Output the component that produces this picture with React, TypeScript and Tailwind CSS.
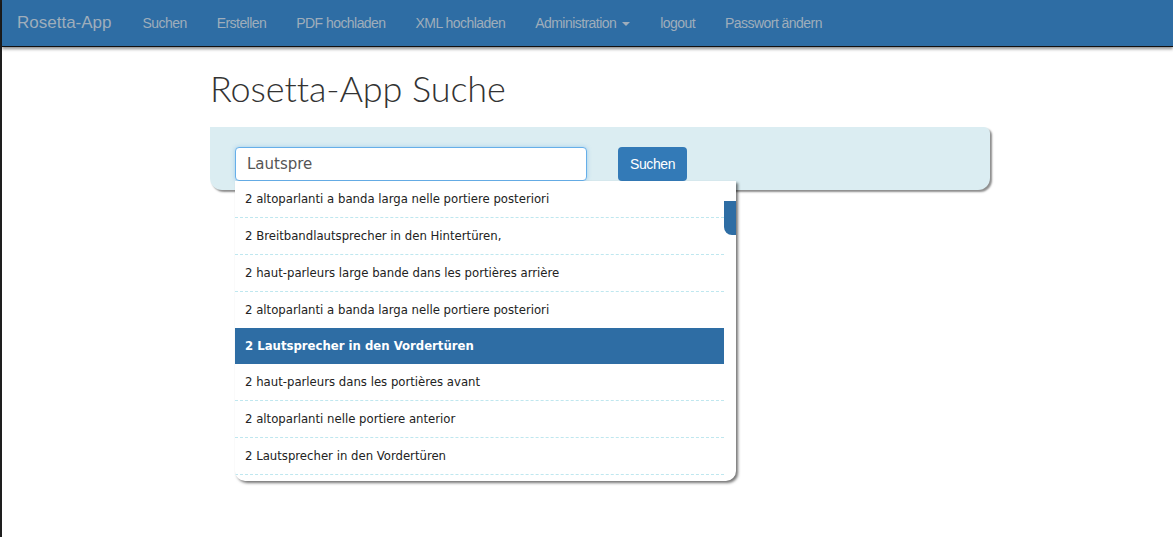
const navItems = ["Suchen", "Erstellen", "PDF hochladen", "XML hochladen"];

const results = [
  "2 altoparlanti a banda larga nelle portiere posteriori",
  "2 Breitbandlautsprecher in den Hintertüren,",
  "2 haut-parleurs large bande dans les portières arrière",
  "2 altoparlanti a banda larga nelle portiere posteriori",
  "2 Lautsprecher in den Vordertüren",
  "2 haut-parleurs dans les portières avant",
  "2 altoparlanti nelle portiere anterior",
  "2 Lautsprecher in den Vordertüren",
];

const Navbar = () => (
  <nav className="flex items-center h-[47px] bg-[#2e6da4] border-b border-[#111] shadow-[0_2px_3px_rgba(0,0,0,0.45)] font-['Liberation_Sans',Arial,sans-serif] text-[#9fadbb]">
    <a className="pl-[15px] pr-[16px] text-[17px]">Rosetta-App</a>
    {navItems.map((item) => (
      <a key={item} className="px-[15px] text-[14px] tracking-[-0.55px]">
        {item}
      </a>
    ))}
    <a className="flex items-center gap-[6px] px-[15px] text-[14px] tracking-[-0.55px]">
      Administration
      <span className="w-0 h-0 border-l-4 border-r-4 border-t-4 border-l-transparent border-r-transparent border-t-[#9fadbb] mt-[2px]"></span>
    </a>
    <a className="px-[15px] text-[14px] tracking-[-0.55px]">logout</a>
    <a className="px-[15px] text-[14px] tracking-[-0.55px]">Passwort ändern</a>
  </nav>
);

const Dropdown = () => (
  <div className="absolute left-0 top-[34px] w-[501px] h-[300px] bg-white rounded-b-[10px] shadow-[2px_2px_3px_rgba(0,0,0,0.55)] overflow-hidden flex">
    <ul className="w-[489px] font-['DejaVu_Sans_Condensed','DejaVu_Sans',sans-serif] text-[13px] text-[#222]">
      {results.map((r, i) =>
        i === 4 ? (
          <li
            key={i}
            className="relative -mt-px h-[36px] flex items-center pl-[10px] bg-[#2e6da4] text-white font-bold"
          >
            {r}
          </li>
        ) : (
          <li
            key={i}
            className="h-[37px] flex items-center pl-[10px] border-b border-dashed border-[#bfe7ef]"
          >
            {r}
          </li>
        )
      )}
    </ul>
    <div className="w-[12px]">
      <div className="mt-[20px] h-[34px] bg-[#2e6da4] rounded-bl-[8px]"></div>
    </div>
  </div>
);

export default function App() {
  return (
    <div className="min-h-[537px] bg-white border-l-2 border-[#1e1e1e]">
      <Navbar />
      <div className="ml-[208px] w-[780px]">
        <h1 className="mt-[20px] h-[42px] text-[36px] leading-[42px] font-light text-[#333] font-['Lato','Liberation_Sans',sans-serif] tracking-[-0.1px]">
          Rosetta-App Suche
        </h1>
        <div className="mt-[18px] h-[63px] bg-[#dbedf2] rounded-tr-[6px] rounded-b-[12px] shadow-[2px_2px_2px_rgba(0,0,0,0.45)] flex items-start pt-[20px] pl-[25px] gap-[31px]">
          <div className="relative">
            <div className="w-[352px] h-[34px] bg-white border border-[#66afe9] rounded-[4px] flex items-center pl-[11px] font-['DejaVu_Sans',sans-serif] text-[15px] text-[#555] shadow-[0_0_4px_rgba(102,175,233,0.5)]">
              Lautspre
            </div>
            <Dropdown />
          </div>
          <button className="h-[34px] px-[12px] bg-[#337ab7] rounded-[4px] text-white text-[14px] tracking-[-0.4px] font-['Liberation_Sans',Arial,sans-serif]">
            Suchen
          </button>
        </div>
      </div>
    </div>
  );
}
